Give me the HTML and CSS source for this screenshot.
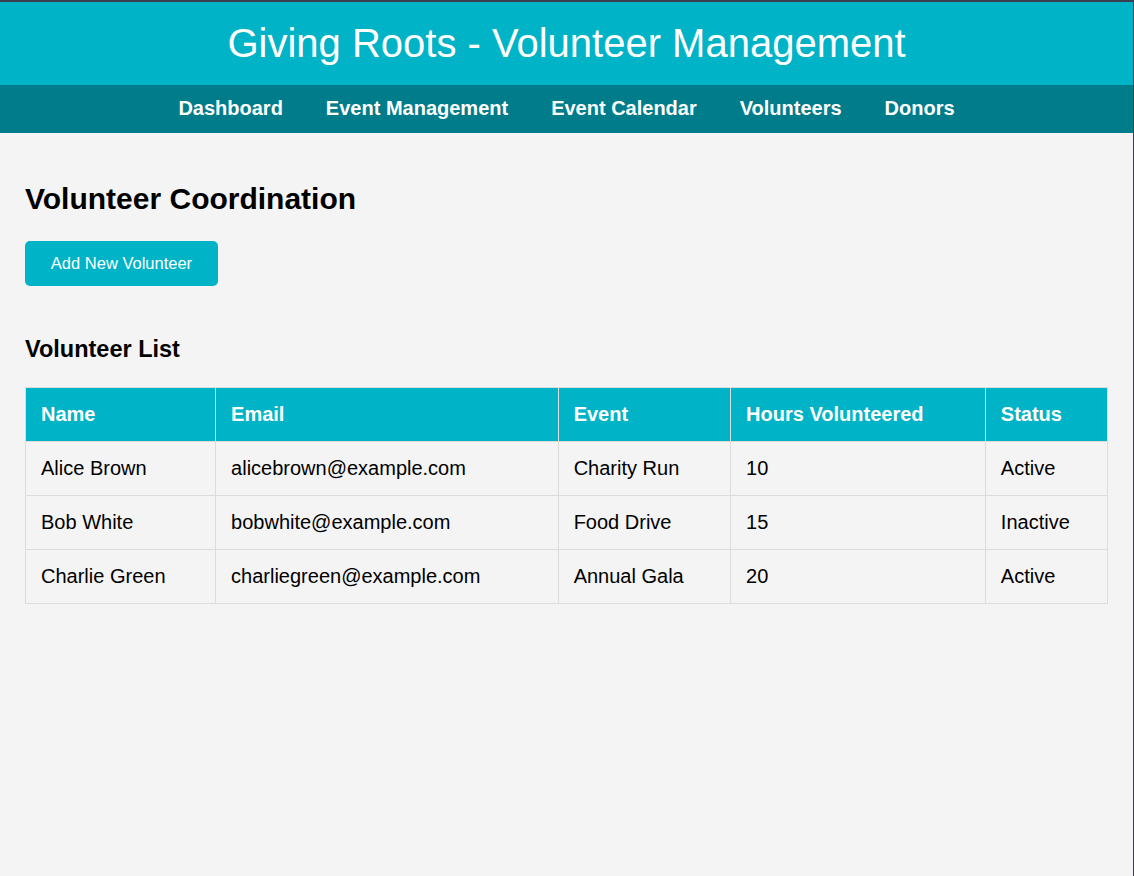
FILE: index.html
```html
<!DOCTYPE html>
<html lang="en">
<head>
<meta charset="utf-8">
<title>Giving Roots - Volunteer Management</title>
<link rel="stylesheet" href="styles.css">
</head>
<body>
<div class="frame">
  <header class="site-header">
    <h1 class="site-title">Giving Roots - Volunteer Management</h1>
  </header>
  <nav class="site-nav">
    <a href="#" class="nav-link">Dashboard</a>
    <a href="#" class="nav-link">Event Management</a>
    <a href="#" class="nav-link">Event Calendar</a>
    <a href="#" class="nav-link">Volunteers</a>
    <a href="#" class="nav-link">Donors</a>
  </nav>
  <main class="content">
    <h2 class="page-title">Volunteer Coordination</h2>
    <button class="btn-primary">Add New Volunteer</button>
    <h3 class="section-title">Volunteer List</h3>
    <table class="vol-table">
      <thead>
        <tr><th>Name</th><th>Email</th><th>Event</th><th>Hours Volunteered</th><th>Status</th></tr>
      </thead>
      <tbody>
        <tr><td>Alice Brown</td><td>alicebrown@example.com</td><td>Charity Run</td><td>10</td><td>Active</td></tr>
        <tr><td>Bob White</td><td>bobwhite@example.com</td><td>Food Drive</td><td>15</td><td>Inactive</td></tr>
        <tr><td>Charlie Green</td><td>charliegreen@example.com</td><td>Annual Gala</td><td>20</td><td>Active</td></tr>
      </tbody>
    </table>
  </main>
</div>
</body>
</html>
```
FILE: styles.css
```css
html, body {
  margin: 0;
  padding: 0;
  height: 100%;
}
body {
  background: #3b3e4b;
  font-family: "Liberation Sans", Arial, sans-serif;
}
.frame {
  box-sizing: border-box;
  height: 100%;
  margin-top: 2px;
  margin-right: 1px;
  background: #f4f4f4;
  display: flex;
  flex-direction: column;
}
.site-header {
  background: #00b3c6;
  height: 83px;
  display: flex;
  align-items: center;
  justify-content: center;
}
.site-title {
  margin: 0;
  color: #fff;
  font-size: 40px;
  font-weight: normal;
}
.site-nav {
  background: #007c8a;
  height: 48px;
  box-sizing: border-box;
  padding-bottom: 2px;
  display: flex;
  align-items: center;
  justify-content: center;
  gap: 43px;
}
.nav-link {
  color: #fff;
  text-decoration: none;
  font-weight: bold;
  font-size: 20px;
}
.content {
  padding: 0 25px;
  flex: 1;
}
.page-title {
  margin: 50px 0 0;
  font-size: 30px;
  line-height: 32px;
  color: #000;
}
.btn-primary {
  display: block;
  margin-top: 26px;
  width: 193px;
  height: 45px;
  border: none;
  border-radius: 5px;
  background: #00b3c6;
  color: #fff;
  font-family: "Liberation Sans", Arial, sans-serif;
  font-size: 16.5px;
}
.section-title {
  margin: 50px 0 0;
  font-size: 23.5px;
  line-height: 26px;
  color: #000;
}
.vol-table {
  margin-top: 25px;
  width: 100%;
  border-collapse: collapse;
  font-size: 20px;
}
.vol-table th,
.vol-table td {
  border: 1px solid #dcdcdc;
  padding: 0 15px;
  height: 54px;
  box-sizing: border-box;
  text-align: left;
}
.vol-table th {
  background: #00b3c6;
  color: #fff;
  font-weight: bold;
}
.vol-table td {
  color: #000;
}
```
